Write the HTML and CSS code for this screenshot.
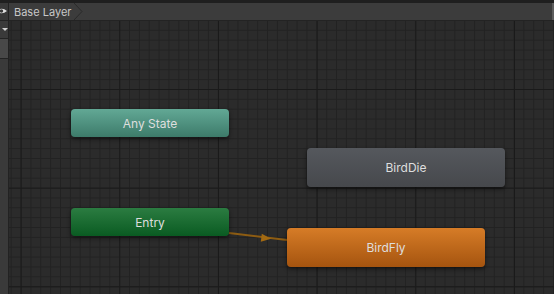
FILE: index.html
```html
<!DOCTYPE html>
<html lang="en">
<head>
    <meta charset="UTF-8">
    <title>Animator</title>
    <link rel="stylesheet" href="styles.css">
</head>
<body>
    <div class="window">
        <div class="top-strip"></div>
        <div class="main">
            <div class="sidebar">
                <div class="side-row eye-row">
                    <svg class="eye" width="8" height="8" viewBox="0 0 8 8">
                        <path d="M-3 4 Q1.5 -0.5 7 4 Q1.5 8.5 -3 4 Z" fill="#e0e0e0"/>
                        <circle cx="1.5" cy="4" r="1.7" fill="#3a3a3a"/>
                    </svg>
                </div>
                <div class="side-row drop-row">
                    <span class="drop-arrow"></span>
                </div>
                <div class="side-row selected-row"></div>
                <div class="side-rest"></div>
            </div>
            <div class="content">
                <div class="breadcrumb">
                    <div class="crumb">
                        <span>Base Layer</span>
                        <svg class="crumb-tip" width="10" height="17" viewBox="0 0 10 17">
                            <path d="M0 0 L8 8.5 L0 17" fill="none" stroke="#2a2a2a" stroke-width="1"/>
                        </svg>
                    </div>
                    <div class="crumb-end"></div>
                </div>
                <div class="graph">
                    <svg class="links" width="545" height="273" viewBox="0 0 545 273">
                        <line x1="220" y1="212" x2="278" y2="219" stroke="#8d5c12" stroke-width="2"/>
                        <polygon points="262,217.8 252.8,212.8 251.8,220.8" fill="#a36a12"/>
                    </svg>
                    <div class="node any-state" style="left: 62px; top: 88px;">Any State</div>
                    <div class="node entry" style="left: 62px; top: 187px;">Entry</div>
                    <div class="node state big" style="left: 298px; top: 127px;">BirdDie</div>
                    <div class="node default big" style="left: 278px; top: 207px;">BirdFly</div>
                </div>
            </div>
        </div>
    </div>
</body>
</html>
```

FILE: styles.css
```css
* {
    margin: 0;
    padding: 0;
    box-sizing: border-box;
}

body {
    font-family: Inter, 'Noto Sans', 'DejaVu Sans', sans-serif;
    background-color: #282828;
    color: #d6d6d6;
    width: 554px;
    height: 294px;
    overflow: hidden;
}

.window {
    display: flex;
    flex-direction: column;
    height: 294px;
}

.top-strip {
    height: 3px;
    background: #1f1f1f;
}

.main {
    flex: 1;
    display: flex;
}

.sidebar {
    width: 9px;
    display: flex;
    flex-direction: column;
    background: #383838;
    border-right: 1px solid #222;
}

.side-row {
    border-bottom: 1px solid #232323;
    display: flex;
    align-items: center;
}

.eye-row {
    height: 18px;
}

.eye {
    margin-top: -2px;
}

.drop-row {
    height: 18px;
    background: #3a3a3a;
}

.drop-arrow {
    width: 0;
    height: 0;
    margin-left: 2px;
    border-left: 3px solid transparent;
    border-right: 3px solid transparent;
    border-top: 3px solid #d0d0d0;
}

.selected-row {
    height: 20px;
    background: #484848;
}

.side-rest {
    flex: 1;
    background: #3a3a3a;
}

.content {
    flex: 1;
    display: flex;
    flex-direction: column;
}

.breadcrumb {
    height: 18px;
    display: flex;
    background: #3c3c3c;
    border-bottom: 1px solid #232323;
}

.crumb {
    display: flex;
    align-items: center;
    padding-left: 5px;
    font-size: 11px;
    color: #c8c8c8;
}

.crumb span {
    margin-right: 3px;
}

.crumb-tip {
    align-self: flex-start;
}

.crumb-end {
    flex: 1;
    border-right: 2px solid #5c5c5c;
}

.graph {
    flex: 1;
    position: relative;
    background-color: #2b2b2b;
    background-image:
        linear-gradient(to right, #1a1a1a 1px, transparent 1px),
        linear-gradient(to bottom, #1a1a1a 1px, transparent 1px),
        linear-gradient(to right, #222 1px, transparent 1px),
        linear-gradient(to bottom, #222 1px, transparent 1px);
    background-size:
        98.7px 100%,
        100% 98.7px,
        9.87px 100%,
        100% 9.87px;
    background-position:
        11.6px 0,
        0 68px,
        1.7px 0,
        0 8.8px;
}

.links {
    position: absolute;
    left: 0;
    top: 0;
}

.node {
    position: absolute;
    width: 158px;
    height: 28px;
    border-radius: 4px;
    display: flex;
    align-items: center;
    justify-content: center;
    font-size: 12px;
    color: #dedede;
    box-shadow: 0 2px 4px rgba(0,0,0,0.55);
}

.node.big {
    width: 198px;
    height: 39px;
}

.any-state {
    background: linear-gradient(to bottom, #62a895 0%, #3d7b6a 100%);
}

.entry {
    background: linear-gradient(to bottom, #2b7c41 0%, #0a5b22 100%);
}

.state {
    background: linear-gradient(to bottom, #55585d 0%, #46484c 100%);
}

.default {
    background: linear-gradient(to bottom, #d67c27 0%, #a5540f 100%);
}
```
